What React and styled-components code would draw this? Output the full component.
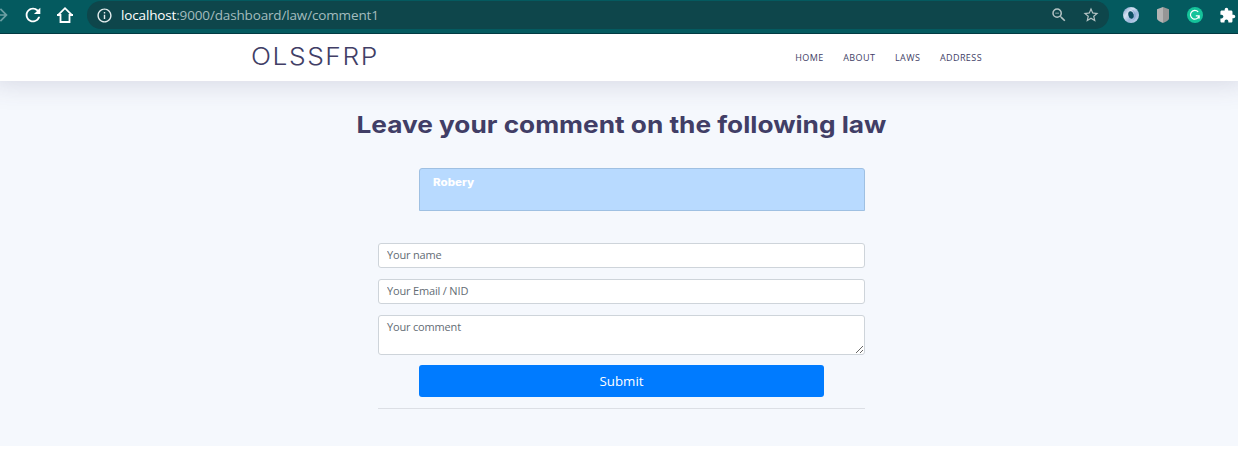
import React from "react";
import styled, { createGlobalStyle } from "styled-components";
import { MdRefresh, MdInfoOutline, MdOutlineZoomOut, MdStarBorder, MdExtension, MdArrowForward } from "react-icons/md";

const Global = createGlobalStyle`
  *, *::before, *::after { box-sizing: border-box; }
  body { margin: 0; background: #fff; overflow: hidden; font-family: "Open Sans", sans-serif; }
`;

const Toolbar = styled.header`
  position: relative;
  z-index: 2;
  display: flex;
  align-items: flex-start;
  height: 34px;
  padding-top: 1px;
  background: #045a5f;
  border-bottom: 1px solid #023a42;
  color: #fff;
`;

const NavIcons = styled.div`
  display: flex;
  align-items: center;
  width: 87px;
  height: 28px;
  flex: none;
`;

const Glyph = styled.span`
  display: flex;
  flex: none;
  margin-left: ${(p) => p.$gap || 0}px;
  color: ${(p) => p.$color || "#fff"};
  svg { display: block; }
`;

const AddressBar = styled.div`
  display: flex;
  align-items: center;
  width: 1022px;
  height: 28px;
  padding: 0 9px;
  border-radius: 14px;
  background: #0e464b;
`;

const Url = styled.span`
  flex: 1;
  margin-left: 8px;
  font: 13.5px/20px "Open Sans", sans-serif;
  letter-spacing: -0.15px;
  white-space: nowrap;
  color: #a4bcbe;
  b { font-weight: 400; color: #fff; }
`;

const Extensions = styled.div`
  display: flex;
  align-items: center;
  height: 28px;
  flex: none;
`;

const Navbar = styled.nav`
  position: relative;
  display: flex;
  align-items: center;
  justify-content: space-between;
  height: 47px;
  padding: 0 256px 0 251px;
  background: #fff;
  box-shadow: 0 -10px 30px 10px rgba(65, 62, 102, 0.2);
`;

const Brand = styled.a`
  padding-bottom: 2px;
  font: 300 23.5px/30px Inter, sans-serif;
  letter-spacing: 1.4px;
  color: #413e66;
  transform: scaleX(1.12);
  transform-origin: left;
`;

const Menu = styled.div`
  display: flex;
  gap: 19.6px;
`;

const MenuLink = styled.a`
  font-size: 9px;
  line-height: 14px;
  letter-spacing: 0.42px;
  color: #413e66;
`;

const Section = styled.main`
  display: flex;
  flex-direction: column;
  height: 365px;
  padding: 28px 373px 0 378px;
  background: #f5f8fd;
`;

const Title = styled.h1`
  align-self: center;
  margin: 0;
  font: 700 23.5px/32px Inter, sans-serif;
  white-space: nowrap;
  color: #413e66;
  transform: scaleX(1.116);
`;

const LawCard = styled.div`
  height: 43px;
  margin: 27px 0 32px 41px;
  padding: 6px 13px;
  background: #b8daff;
  border: 1px solid #9fc0e2;
  border-radius: 3px 3px 0 0;
`;

const LawName = styled.strong`
  display: inline-block;
  font: 800 10.5px/15px Inter, sans-serif;
  vertical-align: top;
  color: #fff;
  transform: scaleX(1.1);
  transform-origin: left;
`;

const Form = styled.form`
  display: flex;
  flex-direction: column;
`;

const Field = styled.input`
  display: block;
  width: 100%;
  height: ${(p) => p.$height || 25}px;
  margin: 0 0 ${(p) => p.$after || 11}px;
  padding: ${(p) => (p.$height ? "3px 8px" : "2px 8px 4px")};
  border: 1px solid #ced4da;
  border-radius: 3px;
  background: #fff;
  font: 11px/16px "Open Sans", sans-serif;
  letter-spacing: -0.17px;
  outline: none;
  &::placeholder { color: #636c74; opacity: 1; }
`;

const Submit = styled.button`
  height: 32px;
  margin: 0 41px 11px;
  padding: 0;
  border: 0;
  border-radius: 3px;
  background: #007bff;
  font: 13.3px/20px "Open Sans", sans-serif;
  color: #fff;
`;

const Divider = styled.hr`
  width: 100%;
  margin: 0;
  border: 0;
  border-top: 1px solid #dcdfe5;
`;

const HomeIcon = () => (
  <svg width="18" height="18" viewBox="0 0 18 18" fill="none" stroke="#fff" strokeWidth="1.8">
    <path d="M1.500 9.600 9 2.200l7.500 7.400M1 9h3.500v7h9V9H17" />
  </svg>
);

const RingIcon = () => (
  <svg width="16" height="16" viewBox="0 0 16 16">
    <defs>
      <linearGradient id="ring" x1="0" y1="0" x2="1" y2="1">
        <stop offset="0" stopColor="#6f92c2" />
        <stop offset=".35" stopColor="#d5e2f2" />
        <stop offset=".6" stopColor="#9db9dd" />
        <stop offset="1" stopColor="#c8d8ee" />
      </linearGradient>
    </defs>
    <circle cx="8" cy="8" r="8" fill="url(#ring)" />
    <path d="M7 2.500c4.500.5 6 7 2.500 11 2.500-1 4-4 3-7-.8-2.500-2.500-4.200-5.500-4z" fill="#7f9fce" opacity=".6" />
    <ellipse cx="8" cy="8" rx="2.600" ry="3.800" fill="#0b4e62" transform="rotate(-15 8 8)" />
  </svg>
);

const ShieldIcon = () => (
  <svg width="12" height="16" viewBox="0 0 12 16">
    <path d="M6 0 12 2.200v9c0 2-3 3.700-6 4.800z" fill="#969696" />
    <path d="M6 0 0 2.200v9c0 2 3 3.700 6 4.800z" fill="#b4b4b4" />
  </svg>
);

const GrammarIcon = () => (
  <svg width="16" height="16" viewBox="0 0 16 16" fill="none">
    <circle cx="8" cy="8" r="8" fill="#15c39a" />
    <path d="M11.200 4.900A4.400 4.400 0 1 0 12.100 8.900H8.800M10 11h2.200V8.900" stroke="#fff" strokeWidth="1.200" />
  </svg>
);

export default function App() {
  return (
    <>
      <Global />
      <Toolbar>
        <NavIcons>
          <Glyph $gap={-9} $color="#6b9fa3"><MdArrowForward size={20} /></Glyph>
          <Glyph $gap={11}><MdRefresh size={22} /></Glyph>
          <Glyph $gap={12}><HomeIcon /></Glyph>
        </NavIcons>
        <AddressBar>
          <Glyph $color="#e4eced"><MdInfoOutline size={17} /></Glyph>
          <Url><b>localhost</b>:9000/dashboard/law/comment1</Url>
          <Glyph $color="#b4c3c4"><MdOutlineZoomOut size={18} /></Glyph>
          <Glyph $gap={14} $color="#b4c3c4"><MdStarBorder size={18} /></Glyph>
        </AddressBar>
        <Extensions>
          <Glyph $gap={14}><RingIcon /></Glyph>
          <Glyph $gap={18}><ShieldIcon /></Glyph>
          <Glyph $gap={18}><GrammarIcon /></Glyph>
          <Glyph $gap={16}><MdExtension size={17} /></Glyph>
        </Extensions>
      </Toolbar>
      <Navbar>
        <Brand>OLSSFRP</Brand>
        <Menu>
          <MenuLink>HOME</MenuLink>
          <MenuLink>ABOUT</MenuLink>
          <MenuLink>LAWS</MenuLink>
          <MenuLink>ADDRESS</MenuLink>
        </Menu>
      </Navbar>
      <Section>
        <Title>Leave your comment on the following law</Title>
        <LawCard><LawName>Robery</LawName></LawCard>
        <Form>
          <Field placeholder="Your name" />
          <Field placeholder="Your Email / NID" />
          <Field as="textarea" placeholder="Your comment" $height={40} $after={10} />
          <Submit type="button">Submit</Submit>
          <Divider />
        </Form>
      </Section>
    </>
  );
}
